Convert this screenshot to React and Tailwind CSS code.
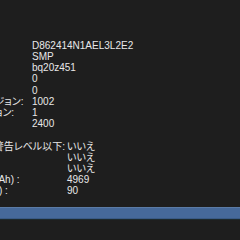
import React from 'react';

const modelInfo = [
  ['シリアル番号:', 'D862414N1AEL3L2E2'],
  ['製造元:', 'SMP'],
  ['デバイス名:', 'bq20z451'],
  ['パックロット番号:', '0'],
  ['PCBロット番号:', '0'],
  ['ファームウェアバージョン:', '1002'],
  ['ハードウェアリビジョン:', '1'],
  ['セルリビジョン:', '2400'],
];

const chargeInfo = [
  ['充電残量が警告レベル以下:', 'いいえ'],
  ['充電完了:', 'いいえ'],
  ['充電中:', 'いいえ'],
  ['充電容量 (mAh) :', '4969'],
  ['充電残量 (%) :', '90'],
];

function Row({ label, value }) {
  return (
    <>
      <div className="whitespace-nowrap">{label}</div>
      <div className="whitespace-nowrap">{value}</div>
    </>
  );
}

export default function App() {
  return (
    <div
      className="relative w-[240px] h-[240px] overflow-hidden bg-[#1e1e1e] text-[#e8e8e8] text-[10px] leading-[11.2px] [font-feature-settings:'palt']"
      style={{ fontFamily: '"Liberation Sans", "Noto Sans CJK JP", sans-serif' }}
    >
      <div className="pt-[28.6px]">
        {/* モデル情報 */}
        <div className="ml-[-100px] whitespace-nowrap">モデル情報:</div>
        <div className="ml-[-86px] grid grid-cols-[118px_auto]">
          {modelInfo.map(([label, value]) => (
            <Row key={label} label={label} value={value} />
          ))}
        </div>

        {/* 充電情報 */}
        <div className="ml-[-100px] whitespace-nowrap">充電情報:</div>
        <div className="ml-[-56px] grid grid-cols-[123px_auto]">
          {chargeInfo.map(([label, value]) => (
            <Row key={label} label={label} value={value} />
          ))}
        </div>
      </div>

      <div className="mt-[10px] h-[12px] bg-[#46699a] border-t border-b border-t-[#5b7ba6] border-b-[#3a5a85]" />
      <div className="h-px bg-[#1d2a2e]" />
    </div>
  );
}
